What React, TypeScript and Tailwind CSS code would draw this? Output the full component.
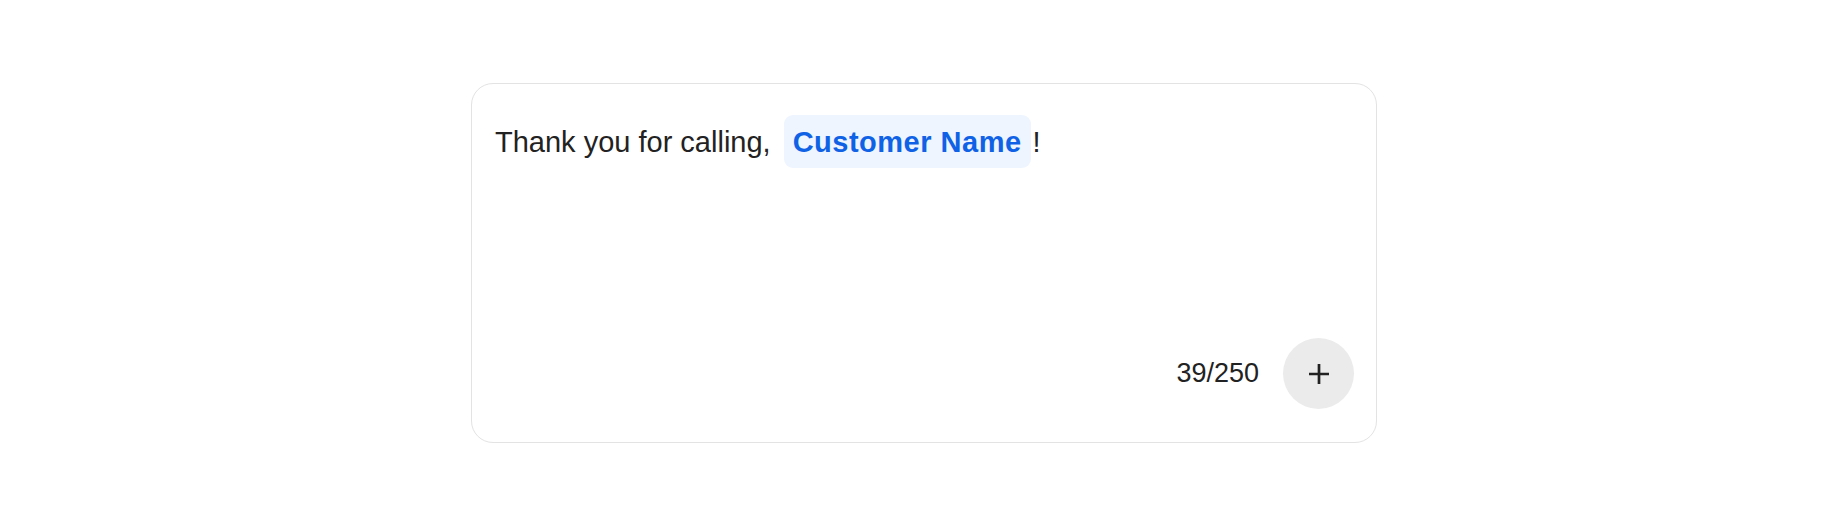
import * as React from 'react';

export default function App() {
  const text = 'Thank you for calling,';
  const total = 250;

  return (
    <div className="flex h-[526px] w-full items-center justify-center bg-white font-['Liberation_Sans',Arial,sans-serif]">
      <div className="flex h-[360px] w-[906px] flex-col justify-between rounded-[22px] border border-[#e3e3e3] bg-white pb-[33px] pl-[23px] pr-[22px] pt-[31px]">
        <div className="flex items-center text-[29px] text-[#222]">
          <span className="pt-[3px]">{text}</span>
          <span className="ml-[13px] inline-flex h-[53px] items-center rounded-[9px] bg-[#eef5ff] px-[9px] pt-[3px] font-bold tracking-[0.5px] text-[#0f62e6]">
            Customer Name
          </span>
          <span className="ml-[2px] pt-[3px]">!</span>
        </div>
        <div className="flex items-center justify-end gap-[24px]">
          <span className="text-[27px] text-[#222]">39/{total}</span>
          <button
            type="button"
            className="flex h-[71px] w-[71px] items-center justify-center rounded-full bg-[#ebebeb]"
          >
            <svg width="22" height="22" viewBox="0 0 22 22" fill="none">
              <path d="M11 1v20M1 11h20" stroke="#222" strokeWidth="2.7" />
            </svg>
          </button>
        </div>
      </div>
    </div>
  );
}
